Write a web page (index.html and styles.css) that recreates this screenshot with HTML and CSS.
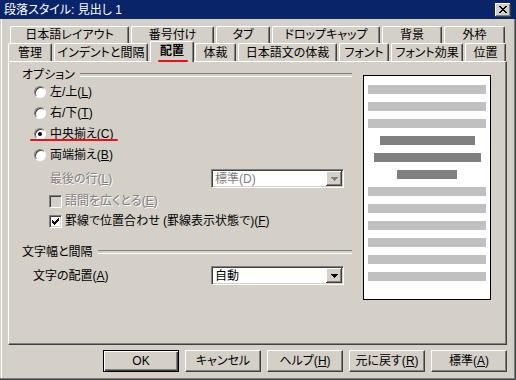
FILE: index.html
```html
<!DOCTYPE html>
<html lang="ja">
<head>
  <meta charset="UTF-8">
  <title>段落スタイル: 見出し 1</title>
  <link rel="stylesheet" href="styles.css">
</head>
<body>
  <div class="window">
    <div class="titlebar">
      <span class="title">段落スタイル: 見出し 1</span>
      <div class="close-btn">
        <svg width="8" height="7" viewBox="0 0 8 7" shape-rendering="crispEdges"><path fill="#000" d="M0 0h2v1h-2z M6 0h2v1h-2z M1 1h2v1h-2z M5 1h2v1h-2z M2 2h4v1h-4z M3 3h2v1h-2z M2 4h4v1h-4z M1 5h2v1h-2z M5 5h2v1h-2z M0 6h2v1h-2z M6 6h2v1h-2z"/></svg>
      </div>
    </div>

    <div class="tabs">
      <div class="tab-row tab-row-back">
        <div class="tab">日本語レイアウト</div>
        <div class="tab">番号付け</div>
        <div class="tab">タブ</div>
        <div class="tab">ドロップキャップ</div>
        <div class="tab">背景</div>
        <div class="tab">外枠</div>
      </div>
      <div class="tab-row tab-row-front">
        <div class="tab">管理</div>
        <div class="tab">インデントと間隔</div>
        <div class="tab tab-active">配置</div>
        <div class="tab">体裁</div>
        <div class="tab">日本語文の体裁</div>
        <div class="tab">フォント</div>
        <div class="tab">フォント効果</div>
        <div class="tab">位置</div>
      </div>
    </div>

    <div class="panel">
      <div class="options">
        <div class="group-title">オプション</div>
        <div class="radio-list">
          <div class="radio-row"><span class="radio"></span><span>左/上(<u>L</u>)</span></div>
          <div class="radio-row"><span class="radio"></span><span>右/下(<u>T</u>)</span></div>
          <div class="radio-row"><span class="radio checked"></span><span>中央揃え(<u>C</u>)</span></div>
          <div class="radio-row"><span class="radio"></span><span>両端揃え(<u>B</u>)</span></div>
        </div>
        <div class="field-row field-row-sub">
          <span class="field-label disabled">最後の行(<u>L</u>)</span>
          <div class="combo combo-disabled">
            <span class="combo-text">標準(D)</span>
            <span class="combo-btn">
              <svg width="7" height="4" viewBox="0 0 7 4" shape-rendering="crispEdges"><path fill="#808080" d="M0 0h7v1h-7z M1 1h5v1h-5z M2 2h3v1h-3z M3 3h1v1h-1z"/></svg>
            </span>
          </div>
        </div>
        <div class="check-row check-row-first">
          <span class="checkbox checkbox-disabled"></span>
          <span class="disabled">語間を広くとる(<u>E</u>)</span>
        </div>
        <div class="check-row">
          <span class="checkbox">
            <svg width="7" height="7" viewBox="0 0 7 7" shape-rendering="crispEdges"><path fill="#000" d="M6 0h1v1h-1z M5 1h2v1h-2z M0 2h1v1h-1z M4 2h3v1h-3z M0 3h2v1h-2z M3 3h3v1h-3z M0 4h5v1h-5z M1 5h3v1h-3z M2 6h1v1h-1z"/></svg>
          </span>
          <span>罫線で位置合わせ (罫線表示状態で)(<u>F</u>)</span>
        </div>

        <div class="group-title group-title-second">文字幅と間隔</div>
        <div class="field-row field-row-main">
          <span class="field-label">文字の配置(<u>A</u>)</span>
          <div class="combo">
            <span class="combo-text">自動</span>
            <span class="combo-btn">
              <svg width="7" height="4" viewBox="0 0 7 4" shape-rendering="crispEdges"><path fill="#000" d="M0 0h7v1h-7z M1 1h5v1h-5z M2 2h3v1h-3z M3 3h1v1h-1z"/></svg>
            </span>
          </div>
        </div>
      </div>

      <div class="preview">
        <div class="bar"></div>
        <div class="bar"></div>
        <div class="bar"></div>
        <div class="bar bar-dark"></div>
        <div class="bar bar-dark"></div>
        <div class="bar bar-dark"></div>
        <div class="bar"></div>
        <div class="bar"></div>
        <div class="bar"></div>
        <div class="bar"></div>
        <div class="bar"></div>
        <div class="bar"></div>
      </div>
    </div>

    <div class="buttons">
      <div class="btn btn-default">OK</div>
      <div class="btn">キャンセル</div>
      <div class="btn"><span>ヘルプ(<u>H</u>)</span></div>
      <div class="btn"><span>元に戻す(<u>R</u>)</span></div>
      <div class="btn"><span>標準(<u>A</u>)</span></div>
    </div>

    <div class="mark mark-tab"></div>
    <div class="mark mark-option"></div>
  </div>
</body>
</html>
```

FILE: styles.css
```css
* {
  box-sizing: border-box;
}
body {
  margin: 0;
  font-family: "Liberation Sans", "Noto Sans CJK JP", sans-serif;
  font-size: 12px;
  line-height: 14px;
  font-feature-settings: "palt";
  color: #000;
  background: #d4d0c8;
}
u {
  text-decoration-thickness: 1px;
  text-underline-offset: 1px;
}
.window {
  position: relative;
  width: 516px;
  height: 380px;
  background: #d4d0c8;
  box-shadow: inset -1px -1px #404040, inset -2px -2px #808080, inset 1px 0 #d4d0c8, inset 2px 0 #fff;
  overflow: hidden;
}

/* title bar */
.titlebar {
  height: 19px;
  background: #0a246a;
  color: #fff;
  display: flex;
  align-items: center;
  justify-content: space-between;
  padding: 0 5px 0 4px;
}
.close-btn {
  width: 16px;
  height: 14px;
  background: #d4d0c8;
  box-shadow: inset -1px -1px #404040, inset 1px 1px #fff, inset -2px -2px #808080;
  display: flex;
  align-items: center;
  justify-content: center;
  padding-bottom: 1px;
}
.close-btn svg {
  display: block;
}

/* tabs */
.tabs {
  padding-top: 7px;
}
.tab-row {
  display: flex;
}
.tab-row-back {
  padding-left: 10px;
  height: 17px;
}
.tab-row-front {
  padding-left: 8px;
  height: 18px;
  align-items: flex-end;
}
.tab {
  flex: none;
  height: 100%;
  margin-right: 2px;
  display: flex;
  align-items: center;
  justify-content: center;
  white-space: nowrap;
  background: #d4d0c8;
  border-top: 1px solid #fff;
  border-left: 1px solid #fff;
  border-right: 1px solid #404040;
  border-radius: 2px 2px 0 0;
  box-shadow: inset -1px 0 #808080;
}
.tab-row-back .tab:nth-child(1) { width: 119px; }
.tab-row-back .tab:nth-child(2) { width: 83px; }
.tab-row-back .tab:nth-child(3) { width: 54px; }
.tab-row-back .tab:nth-child(4) { width: 108px; }
.tab-row-back .tab:nth-child(5) { width: 60px; }
.tab-row-back .tab:nth-child(6) { width: 61px; }
.tab-row-front .tab:nth-child(1) { width: 44px; }
.tab-row-front .tab:nth-child(2) { width: 94px; }
.tab-row-front .tab:nth-child(3) { width: 44px; }
.tab-row-front .tab:nth-child(4) { width: 41px; }
.tab-row-front .tab:nth-child(5) { width: 99px; }
.tab-row-front .tab:nth-child(6) { width: 50px; }
.tab-row-front .tab:nth-child(7) { width: 72px; }
.tab-row-front .tab:nth-child(8) { width: 41px; }
.tab-active {
  position: relative;
  z-index: 2;
  height: 21px;
  margin-bottom: -1px;
  margin-right: 1px;
  padding-bottom: 2px;
  font-weight: bold;
}

/* page */
.panel {
  margin-left: 8px;
  width: 499px;
  height: 284px;
  border: 1px solid;
  border-color: #fff #404040 #404040 #fff;
  box-shadow: inset -1px -1px #808080;
  padding: 6px 0 0 13px;
  display: flex;
  align-items: flex-start;
}
.options {
  width: 330px;
  flex: none;
}
.group-title {
  display: flex;
  align-items: center;
  height: 14px;
}
.group-title::after {
  content: "";
  flex: 1;
  height: 2px;
  margin-left: 5px;
  border-top: 1px solid #808080;
  border-bottom: 1px solid #fff;
}
.group-title-second {
  margin-top: 14px;
}
.radio-list {
  margin-top: -1px;
  padding-left: 12px;
}
.radio-row {
  height: 21px;
  display: flex;
  align-items: center;
  gap: 4px;
}
.radio {
  position: relative;
  width: 12px;
  height: 12px;
  border-radius: 50%;
  border: 1px solid;
  border-color: #808080 #fff #fff #808080;
  background: #fff;
  box-shadow: inset 1px 1px #404040;
}
.radio.checked::after {
  content: "";
  position: absolute;
  left: 3px;
  top: 3px;
  width: 4px;
  height: 4px;
  border-radius: 50%;
  background: #000;
}
.field-row {
  display: flex;
  align-items: center;
  height: 19px;
}
.field-row-sub {
  margin-top: 4px;
  padding-left: 28px;
}
.field-row-sub .field-label {
  width: 161px;
}
.field-row-main {
  margin-top: 7px;
  padding-left: 11px;
}
.field-row-main .field-label {
  width: 178px;
}
.disabled {
  color: #808080;
  text-shadow: 1px 1px #fff;
}
.combo {
  width: 133px;
  height: 19px;
  display: flex;
  align-items: center;
  padding: 1px 1px 1px 3px;
  background: #fff;
  border: 1px solid;
  border-color: #808080 #fff #fff #808080;
  box-shadow: inset 1px 1px #404040, inset -1px -1px #d4d0c8;
}
.combo-disabled .combo-text {
  color: #808080;
}
.combo-btn {
  margin-left: auto;
  width: 16px;
  height: 15px;
  display: flex;
  align-items: center;
  justify-content: center;
  background: #d4d0c8;
  box-shadow: inset -1px -1px #404040, inset 1px 1px #fff, inset -2px -2px #808080;
}
.check-row {
  height: 20px;
  display: flex;
  align-items: center;
  gap: 3px;
  padding-left: 27px;
}
.check-row-first {
  margin-top: 3px;
}
.checkbox {
  width: 13px;
  height: 13px;
  display: flex;
  align-items: center;
  justify-content: center;
  background: #fff;
  border: 1px solid;
  border-color: #808080 #fff #fff #808080;
  box-shadow: inset 1px 1px #404040, inset -1px -1px #d4d0c8;
}
.checkbox-disabled {
  background: #d4d0c8;
}

/* preview */
.preview {
  flex: none;
  margin: 7px 0 0 11px;
  width: 128px;
  height: 225px;
  background: #fff;
  border: 1px solid #000;
  padding: 9px 4px 0;
  display: flex;
  flex-direction: column;
  align-items: center;
  gap: 8px;
  overflow: hidden;
}
.bar {
  flex: none;
  width: 100%;
  height: 9px;
  background: #c0c0c0;
}
.bar-dark {
  background: #808080;
}
.bar:nth-child(4) { width: 95px; }
.bar:nth-child(5) { width: 107px; }
.bar:nth-child(6) { width: 60px; }

/* buttons */
.buttons {
  display: flex;
  gap: 6px;
  margin-top: 5px;
  padding-left: 103px;
}
.btn {
  width: 76px;
  height: 22px;
  display: flex;
  align-items: center;
  justify-content: center;
  border: 1px solid;
  border-color: #fff #404040 #404040 #fff;
  box-shadow: inset -1px -1px #808080;
}
.btn-default {
  border-color: #000;
  box-shadow: inset 1px 1px #fff, inset -1px -1px #404040, inset -2px -2px #808080;
}

/* red annotations */
.mark {
  position: absolute;
  z-index: 3;
  height: 2px;
  border-radius: 1px;
  background: #e8101a;
}
.mark-tab {
  left: 158px;
  top: 60px;
  width: 30px;
}
.mark-option {
  left: 30px;
  top: 139px;
  width: 88px;
}
```
